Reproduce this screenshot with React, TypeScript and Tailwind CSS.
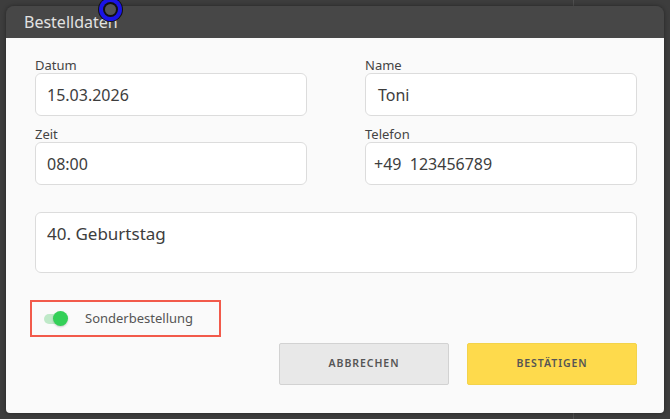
import React from 'react';

const font = { fontFamily: '"Noto Sans", "DejaVu Sans", sans-serif' };

function Field({ label, value, padLeft = 'pl-[11px]' }: { label: string; value: string; padLeft?: string }) {
  return (
    <div className="flex flex-col">
      <label className="text-[13px] leading-[15px] text-[#444]">{label}</label>
      <div
        className={`h-[43px] flex items-center rounded-[6px] border border-[#dcdcdc] bg-white ${padLeft} text-[16px] text-[#3d3d3d] whitespace-pre`}
      >
        {value}
      </div>
    </div>
  );
}

export default function App() {
  return (
    <div className="relative w-[670px] h-[419px] overflow-hidden bg-[#3d3d3d]" style={font}>
      {/* background panel seam */}
      <div className="absolute left-[573px] top-0 h-full w-px bg-[#4f4f4f]" />

      <div className="relative px-[6px] pt-[6px]">
        <div className="flex flex-col w-[658px] h-[407px] rounded-t-[8px] rounded-b-[4px] overflow-hidden shadow-[0_0_4px_rgba(0,0,0,0.4)]">
          <div className="h-[32px] shrink-0 bg-[#474747] flex items-center pl-[18px] text-[16px] text-[#e2e2e2]">
            Bestelldaten
          </div>

          <div className="flex-1 bg-[#fafafa] pl-[29px] pr-[27px] pt-[20px]">
            <div className="grid grid-cols-2 gap-x-[58px] gap-y-[11px]">
              <Field label="Datum" value="15.03.2026" />
              <Field label="Name" value="Toni" padLeft="pl-[12px]" />
              <Field label="Zeit" value="08:00" />
              <Field label="Telefon" value="+49  123456789" padLeft="pl-[8px]" />
            </div>

            <div className="mt-[27px] h-[61px] rounded-[6px] border border-[#dcdcdc] bg-white pl-[11px] pt-[10px] text-[17px] leading-[22px] text-[#3d3d3d]">
              40. Geburtstag
            </div>

            <div className="mt-[27px] -ml-[5px] w-[191px] h-[37px] border-2 border-[#f25a4b] flex items-center pl-[12px]">
              <div className="relative w-[24px] h-[15px] flex items-center">
                <div className="w-[22px] h-[10px] rounded-full bg-[#bfe9c8]" />
                <div className="absolute right-0 top-0 w-[15px] h-[15px] rounded-full bg-[#34d058] shadow-[0_1px_2px_rgba(0,0,0,0.2)]" />
              </div>
              <span className="ml-[17px] text-[13px] text-[#555]">Sonderbestellung</span>
            </div>

            <div className="mt-[6px] flex justify-end gap-[18px]">
              <button className="w-[170px] h-[42px] rounded-[2px] border border-[#d2d2d2] bg-[#e8e8e8] text-[10.5px] font-semibold tracking-[0.09em] text-[#555]">
                ABBRECHEN
              </button>
              <button className="w-[170px] h-[42px] rounded-[2px] border border-[#f3d34a] bg-[#feda4c] text-[10.5px] font-semibold tracking-[0.09em] text-[#555]">
                BESTÄTIGEN
              </button>
            </div>
          </div>
        </div>
      </div>

      {/* touch indicator */}
      <div className="absolute left-[98px] top-[-3px] w-[25px] h-[25px] rounded-full bg-[#111] p-[1px]">
        <div className="w-full h-full rounded-full bg-[#1a14e6] p-[4px]">
          <div className="w-full h-full rounded-full bg-[#111] p-[2px]">
            <div className="w-full h-full rounded-full bg-[#555]" />
          </div>
        </div>
      </div>
    </div>
  );
}
